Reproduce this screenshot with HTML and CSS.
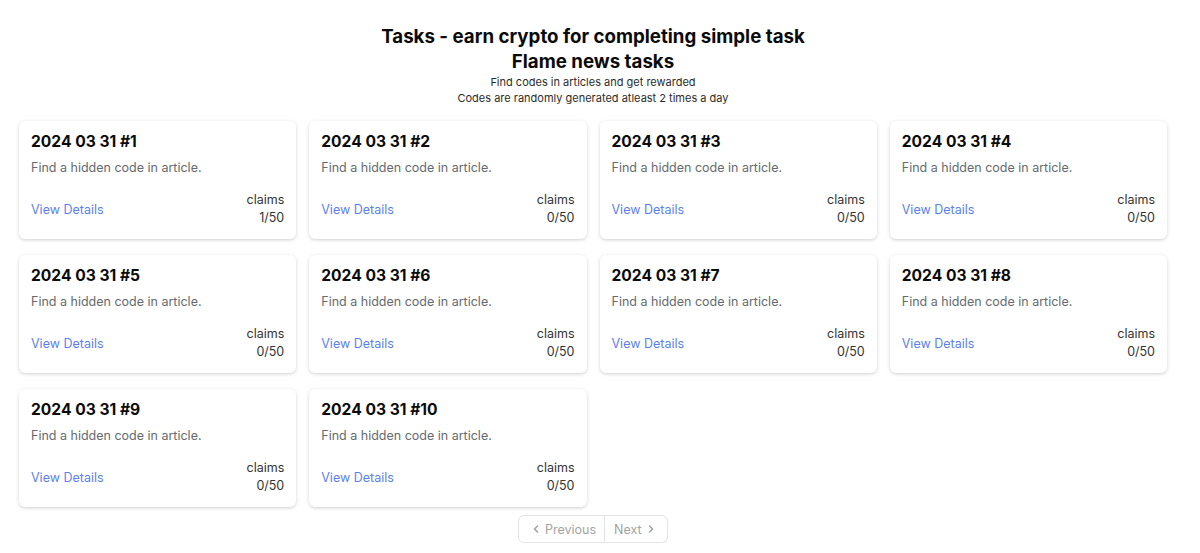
FILE: index.html
```html
<!DOCTYPE html>
<html lang="en">
<head>
<meta charset="utf-8">
<title>Tasks</title>
<link rel="stylesheet" href="styles.css">
</head>
<body>
<main class="page">
  <header class="intro">
    <h1 class="intro-title">Tasks - earn crypto for completing simple task</h1>
    <h2 class="intro-subtitle">Flame news tasks</h2>
    <p class="intro-note">Find codes in articles and get rewarded</p>
    <p class="intro-note">Codes are randomly generated atleast 2 times a day</p>
  </header>

  <section class="task-grid">
    <article class="task-card">
      <h3 class="task-title">2024 03 31 #1</h3>
      <p class="task-desc">Find a hidden code in article.</p>
      <div class="task-foot"><a class="task-link" href="#">View Details</a><div class="task-claims"><span>claims</span><span>1/50</span></div></div>
    </article>
    <article class="task-card">
      <h3 class="task-title">2024 03 31 #2</h3>
      <p class="task-desc">Find a hidden code in article.</p>
      <div class="task-foot"><a class="task-link" href="#">View Details</a><div class="task-claims"><span>claims</span><span>0/50</span></div></div>
    </article>
    <article class="task-card">
      <h3 class="task-title">2024 03 31 #3</h3>
      <p class="task-desc">Find a hidden code in article.</p>
      <div class="task-foot"><a class="task-link" href="#">View Details</a><div class="task-claims"><span>claims</span><span>0/50</span></div></div>
    </article>
    <article class="task-card">
      <h3 class="task-title">2024 03 31 #4</h3>
      <p class="task-desc">Find a hidden code in article.</p>
      <div class="task-foot"><a class="task-link" href="#">View Details</a><div class="task-claims"><span>claims</span><span>0/50</span></div></div>
    </article>
    <article class="task-card">
      <h3 class="task-title">2024 03 31 #5</h3>
      <p class="task-desc">Find a hidden code in article.</p>
      <div class="task-foot"><a class="task-link" href="#">View Details</a><div class="task-claims"><span>claims</span><span>0/50</span></div></div>
    </article>
    <article class="task-card">
      <h3 class="task-title">2024 03 31 #6</h3>
      <p class="task-desc">Find a hidden code in article.</p>
      <div class="task-foot"><a class="task-link" href="#">View Details</a><div class="task-claims"><span>claims</span><span>0/50</span></div></div>
    </article>
    <article class="task-card">
      <h3 class="task-title">2024 03 31 #7</h3>
      <p class="task-desc">Find a hidden code in article.</p>
      <div class="task-foot"><a class="task-link" href="#">View Details</a><div class="task-claims"><span>claims</span><span>0/50</span></div></div>
    </article>
    <article class="task-card">
      <h3 class="task-title">2024 03 31 #8</h3>
      <p class="task-desc">Find a hidden code in article.</p>
      <div class="task-foot"><a class="task-link" href="#">View Details</a><div class="task-claims"><span>claims</span><span>0/50</span></div></div>
    </article>
    <article class="task-card">
      <h3 class="task-title">2024 03 31 #9</h3>
      <p class="task-desc">Find a hidden code in article.</p>
      <div class="task-foot"><a class="task-link" href="#">View Details</a><div class="task-claims"><span>claims</span><span>0/50</span></div></div>
    </article>
    <article class="task-card">
      <h3 class="task-title">2024 03 31 #10</h3>
      <p class="task-desc">Find a hidden code in article.</p>
      <div class="task-foot"><a class="task-link" href="#">View Details</a><div class="task-claims"><span>claims</span><span>0/50</span></div></div>
    </article>
  </section>

  <nav class="pager">
    <a class="pager-btn pager-prev" href="#">
      <svg class="pager-arrow" viewBox="0 0 6 8" width="6" height="8" aria-hidden="true"><path d="M4.5 1 L1.5 4 L4.5 7" fill="none" stroke="currentColor" stroke-width="1.6" stroke-linecap="round" stroke-linejoin="round"/></svg>
      Previous
    </a>
    <a class="pager-btn pager-next" href="#">
      Next
      <svg class="pager-arrow" viewBox="0 0 6 8" width="6" height="8" aria-hidden="true"><path d="M1.5 1 L4.5 4 L1.5 7" fill="none" stroke="currentColor" stroke-width="1.6" stroke-linecap="round" stroke-linejoin="round"/></svg>
    </a>
  </nav>
</main>
</body>
</html>
```

FILE: styles.css
```css
* {
  box-sizing: border-box;
}

html, body {
  margin: 0;
  padding: 0;
  background: #ffffff;
}

body {
  font-family: Inter, "Noto Sans", "Liberation Sans", sans-serif;
  color: #111111;
}

.page {
  width: 1148px;
  margin-left: 19px;
  padding-top: 24px;
}

.intro {
  text-align: center;
}

.intro-title,
.intro-subtitle {
  margin: 0;
  font-size: 18.7px;
  font-weight: 700;
  line-height: 25px;
  color: #0b0b0b;
}

.intro-note {
  margin: 0;
  font-size: 11px;
  line-height: 16px;
  color: #2b2b2b;
}

.task-grid {
  display: grid;
  grid-template-columns: repeat(4, 1fr);
  column-gap: 13px;
  row-gap: 16px;
  margin-top: 15px;
}

.task-card {
  background: #ffffff;
  border-radius: 6px;
  box-shadow: 0 1px 4px rgba(0, 0, 0, 0.14), 0 1px 2px rgba(0, 0, 0, 0.06);
  padding: 11px 12px 12px 12px;
  height: 118px;
  display: flex;
  flex-direction: column;
}

.task-title {
  margin: 0;
  font-size: 15.6px;
  font-weight: 700;
  line-height: 20px;
  color: #0b0b0b;
}

.task-desc {
  margin: 7px 0 0;
  font-size: 12.5px;
  line-height: 18px;
  color: #666a70;
}

.task-foot {
  margin-top: auto;
  display: flex;
  justify-content: space-between;
  align-items: center;
}

.task-link {
  font-size: 12.5px;
  color: #5b7ff0;
  text-decoration: none;
}

.task-claims {
  display: flex;
  flex-direction: column;
  align-items: flex-end;
  font-size: 12.5px;
  line-height: 18px;
  color: #333333;
}

.pager {
  display: flex;
  justify-content: center;
  margin-top: 8px;
}

.pager-btn {
  display: flex;
  align-items: center;
  gap: 6px;
  height: 28px;
  font-size: 12.5px;
  color: #a3a3a3;
  text-decoration: none;
  border: 1px solid #e3e3e3;
}

.pager-prev {
  width: 87px;
  padding-left: 14px;
  border-radius: 6px 0 0 6px;
}

.pager-next {
  width: 63px;
  padding-left: 9px;
  border-left: none;
  border-radius: 0 6px 6px 0;
}

.pager-arrow {
  flex: none;
}
```
